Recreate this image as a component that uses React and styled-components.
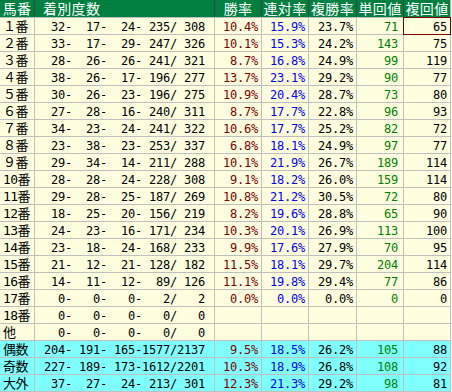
import React from 'react'
import styled, { createGlobalStyle } from 'styled-components'

const GlobalStyle = createGlobalStyle`
    body {
        margin: 0;
        background: #fff;
    }
`;

const FW = ['０', '１', '２', '３', '４', '５', '６', '７', '８', '９']

const rows = [
    [1, [32, 17, 24, 235, 308], ['10.4', '15.9', '23.7', 71, 65]],
    [2, [33, 17, 29, 247, 326], ['10.1', '15.3', '24.2', 143, 75]],
    [3, [28, 26, 26, 241, 321], ['8.7', '16.8', '24.9', 99, 119]],
    [4, [38, 26, 17, 196, 277], ['13.7', '23.1', '29.2', 90, 77]],
    [5, [30, 26, 23, 196, 275], ['10.9', '20.4', '28.7', 73, 80]],
    [6, [27, 28, 16, 240, 311], ['8.7', '17.7', '22.8', 96, 93]],
    [7, [34, 23, 24, 241, 322], ['10.6', '17.7', '25.2', 82, 72]],
    [8, [23, 38, 23, 253, 337], ['6.8', '18.1', '24.9', 97, 77]],
    [9, [29, 34, 14, 211, 288], ['10.1', '21.9', '26.7', 189, 114]],
    [10, [28, 28, 24, 228, 308], ['9.1', '18.2', '26.0', 159, 114]],
    [11, [29, 28, 25, 187, 269], ['10.8', '21.2', '30.5', 72, 80]],
    [12, [18, 25, 20, 156, 219], ['8.2', '19.6', '28.8', 65, 90]],
    [13, [24, 23, 16, 171, 234], ['10.3', '20.1', '26.9', 113, 100]],
    [14, [23, 18, 24, 168, 233], ['9.9', '17.6', '27.9', 70, 95]],
    [15, [21, 12, 21, 128, 182], ['11.5', '18.1', '29.7', 204, 114]],
    [16, [14, 11, 12, 89, 126], ['11.1', '19.8', '29.4', 77, 86]],
    [17, [0, 0, 0, 2, 2], ['0.0', '0.0', '0.0', 0, 0]],
    [18, [0, 0, 0, 0, 0], null],
    ['他', [0, 0, 0, 0, 0], null],
]

const totals = [
    ['偶数', [204, 191, 165, 1577, 2137], ['9.5', '18.5', '26.2', 105, 88]],
    ['奇数', [227, 189, 173, 1612, 2201], ['10.3', '18.9', '26.8', 108, 92]],
    ['大外', [37, 27, 24, 213, 301], ['12.3', '21.3', '29.2', 98, 81]],
]

const pad4 = (n) => String(n).padStart(4, ' ')
const counts = (c) => `${pad4(c[0])}-${pad4(c[1])}-${pad4(c[2])}-${pad4(c[3])}/${pad4(c[4])}`
const label = (l) => typeof l === 'number' ? (l < 10 ? FW[l] : String(l)) + '番' : l

const headers = ['馬番', '着別度数', '勝率', '連対率', '複勝率', '単回値', '複回値']

const App = () => {
    const renderRow = ([l, c, s], bg, i) => (
        <Row key={l}>
            <NameCell bg={bg}>{label(l)}</NameCell>
            <CountCell bg={bg}>{counts(c)}</CountCell>
            <NumCell bg={bg} color='#800000'>{s && s[0] + '%'}</NumCell>
            <NumCell bg={bg} color='#0000ff'>{s && s[1] + '%'}</NumCell>
            <NumCell bg={bg} color='#000'>{s && s[2] + '%'}</NumCell>
            <NumCell bg={bg} color='#008000' right={5}>{s && s[3]}</NumCell>
            <NumCell bg={bg} color='#000' mark={i === 0 && bg === '#ffffe0'}>{s && s[4]}</NumCell>
        </Row>
    )

    return (
        <>
            <GlobalStyle />
            <Table>
                <Row>
                    {headers.map((h, i) => (
                        <HeadCell key={h} wide={i === 1}>{h}</HeadCell>
                    ))}
                </Row>
                {rows.map((r, i) => renderRow(r, '#ffffe0', i))}
                {totals.map((r, i) => renderRow(r, '#80ffff', i + 100))}
            </Table>
        </>
    )
}

const Table = styled.div`
    display: inline-grid;
    grid-template-columns: 34px 179px 46px 46px 47px 46px 46px;
    grid-template-rows: 17px repeat(22, 16px);
    gap: 1px;
    padding: 0 1px 1px 0;
    background-color: #c0c0c0;
    font-family: "DejaVu Sans Mono", "Noto Sans CJK JP", monospace;
    font-size: 12px;
    letter-spacing: -0.22px;
`;

const Row = styled.div`
    display: contents;
`;

const Cell = styled.div`
    background-color: ${(p) => p.bg || '#ffffe0'};
    white-space: pre;
    overflow: hidden;
    line-height: 14px;
    padding-top: 2px;
`;

const HeadCell = styled.div`
    background-color: #008040;
    color: #fff;
    font-family: "Noto Sans CJK JP", sans-serif;
    font-size: 14px;
    letter-spacing: 0.3px;
    line-height: 17px;
    text-align: ${(p) => (p.wide ? 'left' : 'center')};
    padding-left: ${(p) => (p.wide ? '8px' : '0')};
    white-space: nowrap;
    box-shadow: -1px 0 0 #404040;
`;

const NameCell = styled(Cell)`
    font-size: 13px;
    letter-spacing: -0.6px;
    padding-left: 3px;
`;

const CountCell = styled(Cell)`
    padding-left: 2px;
`;

const NumCell = styled(Cell)`
    color: ${(p) => p.color};
    text-align: right;
    padding-right: ${(p) => (p.right || 3)}px;
    ${(p) => p.mark && `
        outline: 1px solid #800000;
        position: relative;
        z-index: 1;
    `}
`;

export default App
